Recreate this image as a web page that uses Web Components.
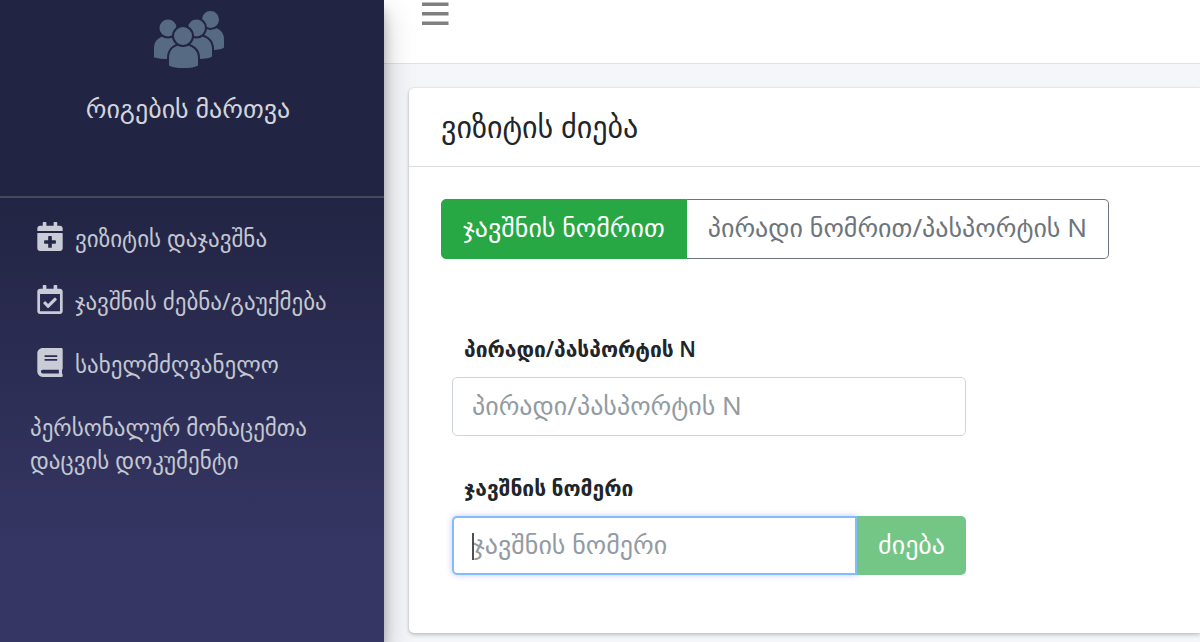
<!DOCTYPE html>
<html lang="ka">
<head>
<meta charset="utf-8">
<meta name="viewport" content="width=device-width, initial-scale=1">
<title>რიგების მართვა</title>
<style>
  html, body { height: 100%; }
  body {
    margin: 0;
    font-family: "Noto Sans", "DejaVu Sans", sans-serif;
    font-size: 23px;
    color: #212529;
    background: #f4f6f9;
    overflow: hidden;
  }
</style>
</head>
<body>
<queue-app>
  <side-bar slot="side" name="რიგების მართვა">
    <nav-item icon="plus">ვიზიტის დაჯავშნა</nav-item>
    <nav-item icon="check">ჯავშნის ძებნა/გაუქმება</nav-item>
    <nav-item icon="book">სახელმძღვანელო</nav-item>
    <nav-item>პერსონალურ მონაცემთა დაცვის დოკუმენტი</nav-item>
  </side-bar>
  <top-bar slot="top"></top-bar>
  <content-card>
    <span slot="title">ვიზიტის ძიება</span>
    <search-tabs></search-tabs>
    <search-form>
      <text-field label="პირადი/პასპორტის N"></text-field>
      <text-field label="ჯავშნის ნომერი" action="ძიება" active></text-field>
    </search-form>
  </content-card>
</queue-app>

<script>
class BaseElement extends HTMLElement {
  constructor() {
    super();
    this.attachShadow({ mode: "open" });
  }
  render() {
    const template = document.createElement("template");
    template.innerHTML = `
      <style>
        * { box-sizing: border-box; }
        :host { display: block; box-sizing: border-box; }
        ${this.getStyles()}
      </style>
      ${this.getTemplate()}
    `;
    this.shadowRoot.replaceChildren(template.content.cloneNode(true));
  }
  connectedCallback() {
    this.render();
  }
}

class QueueApp extends BaseElement {
  getStyles() {
    return `
      :host {
        display: grid;
        grid-template-columns: 384px minmax(0, 1fr);
        min-height: 100%;
      }
      .main { padding-bottom: 8px; }
    `;
  }
  getTemplate() {
    return `
      <slot name="side"></slot>
      <div class="main">
        <slot name="top"></slot>
        <slot></slot>
      </div>
    `;
  }
}

class SideBar extends BaseElement {
  getStyles() {
    return `
      :host {
        position: relative;
        z-index: 1;
        color: #c2c7d0;
        background: linear-gradient(#222443 0, #222443 30%, #363664 86%);
        box-shadow: 0 14px 28px rgba(0, 0, 0, .25), 0 10px 10px rgba(0, 0, 0, .22);
      }
      .brand {
        display: flex;
        flex-direction: column;
        align-items: center;
        gap: 24px;
        height: 198px;
        padding: 10px 8px 0 0;
        border-bottom: 2px solid #474a5c;
      }
      .brand svg {
        width: 72px;
        height: 58px;
        margin-left: 4px;
      }
      .brand a {
        color: #d3d5dc;
        font-size: 26px;
        line-height: 32px;
        text-decoration: none;
      }
      nav {
        display: grid;
        gap: 30px;
        padding: 24px 30px;
      }
    `;
  }
  getTemplate() {
    return `
      <div class="brand">
        <!--People group-->
        <svg viewBox="0 0 72 58" fill="#566a84" stroke="#222443" stroke-width="2" aria-hidden="true">
          <path d="M46 39V28c0-8 5-12 11-12 8 0 14 6 14 13v9q-3 3-12 3z"/>
          <circle cx="56.500" cy="9.500" r="9.500"/>
          <path d="M30 50V38c0-9 7-13 14-13s15 4 15 14v8q-3 3-15 3z"/>
          <circle cx="42.500" cy="18" r="9.500"/>
          <path d="M-1 48V38c0-9 7-13 14-13s15 4 15 14v11q-23 1-29-2z"/>
          <circle cx="14" cy="18" r="9.500"/>
          <path d="M14 56V48c0-9 6-14 15-14s16 5 16 14v8q-5 3-16 3t-15-3z"/>
          <circle cx="29" cy="26" r="10"/>
        </svg>
        <a href="#">${this.getAttribute("name")}</a>
      </div>
      <nav><slot></slot></nav>
    `;
  }
}

const ICONS = {
  plus: "M436 160H12c-6.600 0-12-5.400-12-12v-36c0-26.500 21.500-48 48-48h48V12c0-6.600 5.400-12 12-12h40c6.600 0 12 5.400 12 12v52h128V12c0-6.600 5.400-12 12-12h40c6.600 0 12 5.400 12 12v52h48c26.500 0 48 21.500 48 48v36c0 6.600-5.400 12-12 12zM12 192h424c6.600 0 12 5.400 12 12v260c0 26.500-21.500 48-48 48H48c-26.500 0-48-21.500-48-48V204c0-6.600 5.400-12 12-12zm316 140c0-6.600-5.400-12-12-12h-60v-60c0-6.600-5.400-12-12-12h-40c-6.600 0-12 5.400-12 12v60h-60c-6.600 0-12 5.400-12 12v40c0 6.600 5.400 12 12 12h60v60c0 6.600 5.400 12 12 12h40c6.600 0 12-5.400 12-12v-60h60c6.600 0 12-5.400 12-12v-40z",
  check: "M400 64h-48V12c0-6.627-5.373-12-12-12h-40c-6.627 0-12 5.373-12 12v52H160V12c0-6.627-5.373-12-12-12h-40c-6.627 0-12 5.373-12 12v52H48C21.490 64 0 85.490 0 112v352c0 26.510 21.490 48 48 48h352c26.510 0 48-21.490 48-48V112c0-26.510-21.490-48-48-48zm-6 400H54a6 6 0 0 1-6-6V160h352v298a6 6 0 0 1-6 6zm-52.849-200.650L198.842 404.519c-4.705 4.667-12.303 4.637-16.971-.068l-75.091-75.699c-4.667-4.705-4.637-12.303.068-16.971l22.719-22.536c4.705-4.667 12.303-4.637 16.970.069l44.104 44.461 111.072-110.181c4.705-4.667 12.303-4.637 16.971.068l22.536 22.718c4.667 4.705 4.636 12.303-.069 16.970z",
  book: "M448 360V24c0-13.300-10.700-24-24-24H96C43 0 0 43 0 96v320c0 53 43 96 96 96h328c13.300 0 24-10.700 24-24v-16c0-7.500-3.500-14.300-8.900-18.700-4.200-15.400-4.200-59.300 0-74.700 5.400-4.300 8.900-11.100 8.900-18.600zM128 134c0-3.300 2.700-6 6-6h212c3.300 0 6 2.700 6 6v20c0 3.300-2.700 6-6 6H134c-3.300 0-6-2.700-6-6v-20zm0 64c0-3.300 2.700-6 6-6h212c3.300 0 6 2.700 6 6v20c0 3.300-2.700 6-6 6H134c-3.300 0-6-2.700-6-6v-20zm253.400 250H96c-17.700 0-32-14.300-32-32 0-17.600 14.400-32 32-32h285.400c-1.900 17.100-1.900 46.900 0 64z"
};

class NavItem extends BaseElement {
  getStyles() {
    return `
      a {
        display: flex;
        gap: 12px;
        color: inherit;
        font-size: 23px;
        line-height: 33px;
        text-decoration: none;
      }
      svg {
        flex: none;
        width: 26px;
        height: 29px;
        margin-left: 7px;
      }
    `;
  }
  getTemplate() {
    const path = ICONS[this.getAttribute("icon")];
    const icon = path
      ? `<svg viewBox="0 0 448 512" fill="#c9ccd6" aria-hidden="true"><path d="${path}"/></svg>`
      : "";
    return `<a href="#">${icon}<span><slot></slot></span></a>`;
  }
}

class TopBar extends BaseElement {
  getStyles() {
    return `
      :host {
        height: 64px;
        padding: 0 36px;
        background: #fff;
        border-bottom: 1px solid #dee2e6;
      }
      button {
        display: block;
        padding: 0;
        border: 0;
        background: none;
      }
      svg { display: block; }
    `;
  }
  getTemplate() {
    return `
      <button type="button" aria-label="მენიუ">
        <svg width="30" height="28" viewBox="0 0 30 28" fill="#7f7f7f">
          <path d="M2 2.500h26.500v3.500H2zM2 12h26.500v3.500H2zM2 21.500h26.500v3.500H2z"/>
        </svg>
      </button>
    `;
  }
}

class ContentCard extends BaseElement {
  getStyles() {
    return `
      :host {
        margin: 24px 0 0 25px;
        background: #fff;
        border-radius: 5px 0 0 5px;
        box-shadow: 0 0 2px rgba(0, 0, 0, .14), 0 2px 4px rgba(0, 0, 0, .2);
      }
      header {
        padding: 20px 32px;
        border-bottom: 1px solid #dcdddf;
      }
      h3 {
        margin: 0;
        font-size: 30px;
        font-weight: 400;
        line-height: 38px;
      }
      .body { padding: 32px 32px 58px; }
    `;
  }
  getTemplate() {
    return `
      <header><h3><slot name="title"></slot></h3></header>
      <div class="body"><slot></slot></div>
    `;
  }
}

class SearchTabs extends BaseElement {
  getStyles() {
    return `
      :host { display: flex; }
      button {
        height: 60px;
        padding: 0 21px 4px;
        border: 1px solid #6c757d;
        background: #fff;
        color: #6c757d;
        font: inherit;
        font-size: 26px;
        white-space: nowrap;
      }
      button.active {
        border-color: #28a745;
        background: #28a745;
        color: #fff;
        border-radius: 5px 0 0 5px;
      }
      button:last-child {
        border-left: 0;
        border-radius: 0 5px 5px 0;
      }
    `;
  }
  getTemplate() {
    return `
      <button type="button" class="active">ჯავშნის ნომრით</button>
      <button type="button">პირადი ნომრით/პასპორტის N</button>
    `;
  }
}

class SearchForm extends BaseElement {
  getStyles() {
    return `
      :host {
        max-width: 514px;
        margin: 74px 0 0 11px;
      }
      form {
        display: grid;
        grid-template-columns: minmax(0, 1fr);
        gap: 36px;
      }
    `;
  }
  getTemplate() {
    return `<form><slot></slot></form>`;
  }
}

class TextField extends BaseElement {
  getStyles() {
    return `
      label {
        display: block;
        margin: 0 0 12px 12px;
        font-size: 21px;
        font-weight: 600;
        line-height: 32px;
      }
      .row {
        display: flex;
        position: relative;
      }
      input {
        flex: 1;
        min-width: 0;
        height: 59px;
        padding: 0 19px 4px;
        border: 1px solid #ced4da;
        border-radius: 5px;
        outline: 0;
        background: #fff;
        color: #495057;
        font: inherit;
        font-size: 26px;
      }
      input::placeholder {
        color: #939ba2;
        opacity: 1;
      }
      :host([active]) input {
        border: 2px solid #80bdff;
        border-radius: 5px 0 0 5px;
        box-shadow: 0 0 6px rgba(90, 70, 190, .3);
        caret-color: transparent;
      }
      :host([active]) .row::before {
        content: "";
        position: absolute;
        left: 20px;
        top: 17px;
        width: 2px;
        height: 27px;
        background: #495057;
      }
      button {
        position: relative;
        padding: 0 21px 4px;
        border: 0;
        border-radius: 0 5px 5px 0;
        background: #74c686;
        color: #fff;
        font: inherit;
        font-size: 26px;
        font-weight: 500;
      }
    `;
  }
  getTemplate() {
    const label = this.getAttribute("label");
    const action = this.getAttribute("action");
    return `
      <label for="field">${label}</label>
      <div class="row">
        <input id="field" type="text" placeholder="${label}">
        ${action ? `<button type="submit" disabled>${action}</button>` : ""}
      </div>
    `;
  }
}

customElements.define("queue-app", QueueApp);
customElements.define("side-bar", SideBar);
customElements.define("nav-item", NavItem);
customElements.define("top-bar", TopBar);
customElements.define("content-card", ContentCard);
customElements.define("search-tabs", SearchTabs);
customElements.define("search-form", SearchForm);
customElements.define("text-field", TextField);
</script>
</body>
</html>
